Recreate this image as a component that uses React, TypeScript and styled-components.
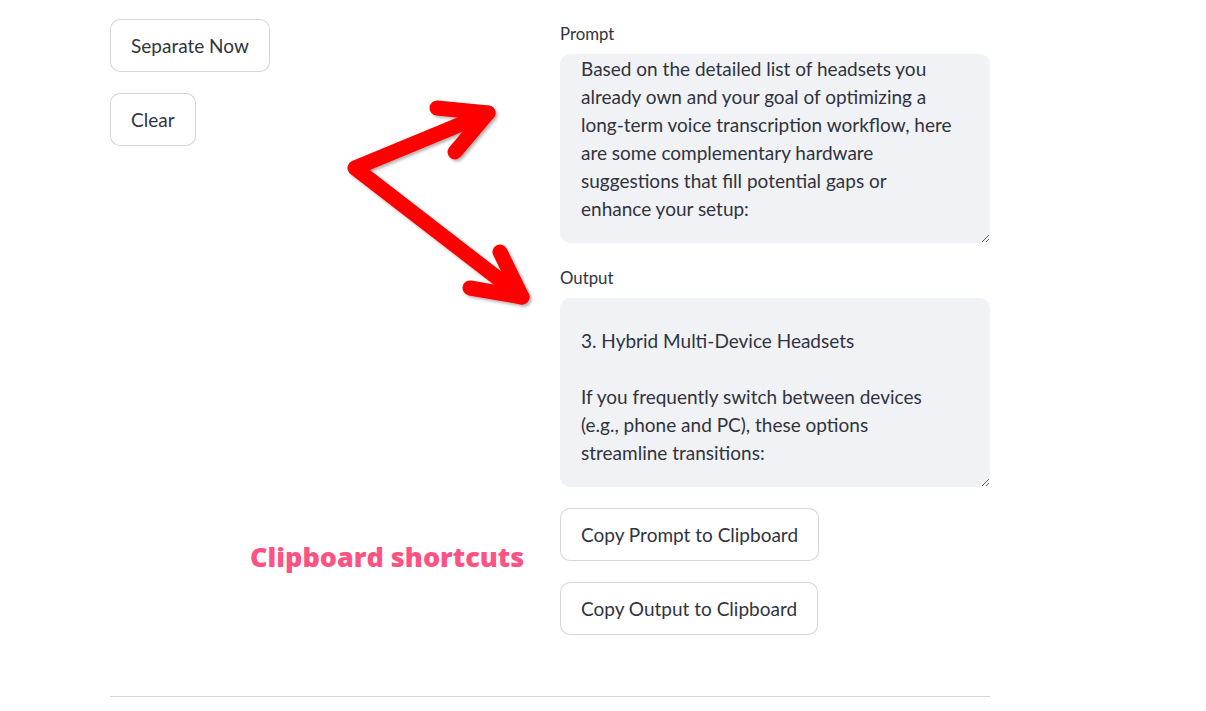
import React from "react";
import styled, { createGlobalStyle } from "styled-components";

const Global = createGlobalStyle`
  html, body { margin: 0; padding: 0; background: #ffffff; }
  body { font-family: "Lato", "Noto Sans", sans-serif; color: #31333f; }
  * { box-sizing: border-box; }
`;

const Page = styled.div`
  position: relative;
  width: 1206px;
  height: 711px;
  overflow: hidden;
  background: #ffffff;
`;

const Main = styled.div`
  width: 880px;
  margin-left: 110px;
  padding-top: 19px;
  display: flex;
  flex-direction: column;
`;

const Columns = styled.div`
  display: grid;
  grid-template-columns: 430px 430px;
  column-gap: 20px;
`;

const Column = styled.div<{ $gap: number; $top?: number }>`
  display: flex;
  flex-direction: column;
  align-items: flex-start;
  gap: ${(p) => p.$gap}px;
  margin-top: ${(p) => p.$top ?? 0}px;
`;

const Field = styled.div`
  display: flex;
  flex-direction: column;
  width: 100%;
`;

const Label = styled.label`
  font-size: 16.8px;
  line-height: 24px;
  padding-top: 3px;
  margin-bottom: 8px;
  color: #31333f;
`;

const TextArea = styled.textarea<{ $padTop: number }>`
  width: 430px;
  height: 189px;
  border: none;
  outline: none;
  border-radius: 10px;
  background: #f0f2f6;
  color: #31333f;
  font-family: inherit;
  font-size: 19px;
  line-height: 28px;
  padding: ${(p) => p.$padTop}px 21px 0 21px;
  resize: vertical;
  overflow: hidden;
  white-space: pre;
`;

const Button = styled.button`
  height: 53px;
  padding: 0 20px;
  border: 1px solid rgba(49, 51, 63, 0.2);
  border-radius: 10px;
  background: #ffffff;
  color: #31333f;
  font-family: inherit;
  font-size: 19px;
  line-height: 28px;
  cursor: pointer;
`;

const Rule = styled.hr`
  margin: 61px 0 0 0;
  border: none;
  border-top: 1px solid #d6d6d9;
  width: 880px;
`;

const Annotation = styled.div`
  position: absolute;
  left: 250px;
  top: 539px;
  font-family: "Open Sans", "Lato", sans-serif;
  font-weight: 800;
  font-size: 27px;
  line-height: 36px;
  color: #fe5282;
  white-space: nowrap;
`;

const Overlay = styled.svg`
  position: absolute;
  left: 0;
  top: 0;
  pointer-events: none;
`;

const promptText =
  "Based on the detailed list of headsets you\nalready own and your goal of optimizing a\nlong-term voice transcription workflow, here\nare some complementary hardware\nsuggestions that fill potential gaps or\nenhance your setup:";

const outputText =
  "3. Hybrid Multi-Device Headsets\n\nIf you frequently switch between devices\n(e.g., phone and PC), these options\nstreamline transitions:";

export default function App() {
  return (
    <Page>
      <Global />
      <Main>
        <Columns>
          <Column $gap={21}>
            <Button>Separate Now</Button>
            <Button>Clear</Button>
          </Column>
          <Column $gap={20}>
            <Field>
              <Label>Prompt</Label>
              <TextArea $padTop={1} readOnly value={promptText} />
            </Field>
            <Field>
              <Label>Output</Label>
              <TextArea $padTop={29} readOnly value={outputText} />
            </Field>
            <Column $gap={21} $top={1}>
              <Button>Copy Prompt to Clipboard</Button>
              <Button>Copy Output to Clipboard</Button>
            </Column>
          </Column>
        </Columns>
        <Rule />
      </Main>
      <Annotation>Clipboard shortcuts</Annotation>
      <Overlay width="1206" height="711" viewBox="0 0 1206 711">
        <defs>
          <filter id="sh" x="-10%" y="-10%" width="120%" height="120%">
            <feDropShadow dx="2" dy="2" stdDeviation="1.5" floodColor="#000" floodOpacity="0.3" />
          </filter>
        </defs>
        <g
          filter="url(#sh)"
          fill="none"
          stroke="#ff0000"
          strokeWidth="15"
          strokeLinecap="round"
          strokeLinejoin="round"
        >
          <path d="M488 113 L355 168 L522 297" />
          <path d="M437 108 L488 113 L455 152" />
          <path d="M500 252 L522 297 L470 288" />
        </g>
      </Overlay>
    </Page>
  );
}
